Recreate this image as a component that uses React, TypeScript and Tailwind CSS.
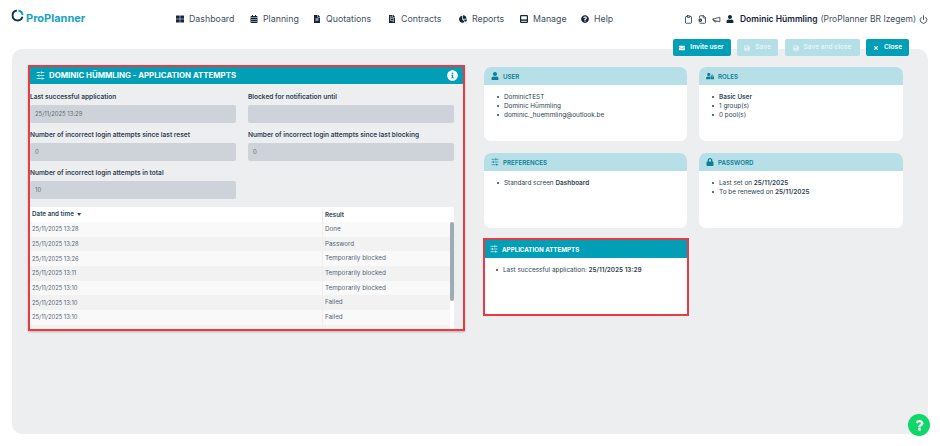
import type { ReactNode } from "react";
import {
  FaCalendarAlt,
  FaChartPie,
  FaEnvelope,
  FaFileAlt,
  FaFileInvoice,
  FaInfoCircle,
  FaLock,
  FaQuestion,
  FaQuestionCircle,
  FaSave,
  FaThLarge,
  FaTimes,
  FaUser,
  FaUserLock,
} from "react-icons/fa";
import { LuMegaphone, LuClipboard, LuFileCog, LuPower, LuSlidersHorizontal } from "react-icons/lu";

function ManageIcon() {
  return (
    <svg width="8" height="8" viewBox="0 0 8 8" fill="none">
      <rect x="0.6" y="0.6" width="6.8" height="6.8" rx="0.6" stroke="currentColor" strokeWidth="1.2" />
      <rect x="1" y="4.4" width="6" height="1.4" fill="currentColor" />
    </svg>
  );
}

const navItems = [
  { label: "Dashboard", icon: <FaThLarge />, width: "w-[74px]" },
  { label: "Planning", icon: <FaCalendarAlt />, width: "w-[63px]" },
  { label: "Quotations", icon: <FaFileAlt />, width: "w-[75px]" },
  { label: "Contracts", icon: <FaFileInvoice />, width: "w-[71px]" },
  { label: "Reports", icon: <FaChartPie />, width: "w-[61px]" },
  { label: "Manage", icon: <ManageIcon />, width: "w-[61px]" },
  { label: "Help", icon: <FaQuestionCircle />, width: "w-[46px]" },
];

const attempts = [
  ["25/11/2025 13:28", "Done"],
  ["25/11/2025 13:28", "Password"],
  ["25/11/2025 13:26", "Temporarily blocked"],
  ["25/11/2025 13:11", "Temporarily blocked"],
  ["25/11/2025 13:10", "Temporarily blocked"],
  ["25/11/2025 13:10", "Failed"],
  ["25/11/2025 13:10", "Failed"],
];

function Field({ label, value }: { label: string; value?: string }) {
  return (
    <div className="w-[206px]">
      <p className="h-[15px] pt-[2px] text-[6.55px] leading-[13px] font-semibold whitespace-nowrap text-[#2f3f52]">{label}</p>
      <div className="mt-[1px] flex h-[18px] items-center rounded-[2px] bg-[#cdd3d9] pl-[5px] text-[5.9px] text-[#5f6b78]">
        {value}
      </div>
    </div>
  );
}

function ActionButton({ icon, label, disabled, width }: { icon: ReactNode; label: string; disabled?: boolean; width: string }) {
  return (
    <button
      className={`flex h-[17px] items-center justify-center gap-[5px] rounded-[2px] text-[6.6px] font-semibold ${width} ${
        disabled ? "bg-[#b5dfe6] text-[#e6f5f7]" : "bg-[#009fb7] text-white"
      }`}
    >
      <span className="text-[6px]">{icon}</span>
      {label}
    </button>
  );
}

function Card({
  icon,
  title,
  items,
  active,
  className,
}: {
  icon: ReactNode;
  title: string;
  items: ReactNode[];
  active?: boolean;
  className: string;
}) {
  return (
    <section className={`flex w-full flex-col overflow-hidden bg-white ${className}`}>
      <div
        className={`flex h-[18px] shrink-0 items-center gap-[4px] text-[6.2px] ${
          active ? "bg-[#009fb7] pl-[5px] font-bold text-white" : "bg-[#b6dfe7] pl-[7px] font-semibold text-[#0b7f95]"
        }`}
      >
        <span className="flex w-[8px] justify-center text-[8px]">{icon}</span>
        <span className="pt-[1px]">{title}</span>
      </div>
      <ul className={`pt-[8px] text-[6.4px] leading-[8.8px] text-[#2f3f52] ${active ? "pl-[11px]" : "pl-[13px]"}`}>
        {items.map((item, i) => (
          <li key={i} className="flex items-center gap-[5px] whitespace-nowrap">
            <span className="size-[2px] rounded-full bg-[#2f3f52]" />
            <span>{item}</span>
          </li>
        ))}
      </ul>
    </section>
  );
}

export default function App() {
  return (
    <div className="relative h-[446px] w-[940px] overflow-hidden bg-white font-['Inter','Liberation_Sans',sans-serif] text-[#2f3f52]">
      <header className="flex h-[39px] items-start">
        <div className="flex w-[90px] items-start gap-[2px] pt-[9px] pl-[11px]">
          <svg width="13" height="13" viewBox="0 0 14 14" fill="none" className="shrink-0">
            <path d="M8 1.6a5.4 5.4 0 0 1 4.4 5" stroke="#009fb7" strokeWidth="2" />
            <path d="M12.3 8.4a5.4 5.4 0 1 1-6-6.8" stroke="#12324f" strokeWidth="2" />
          </svg>
          <span className="pt-[2px] text-[11px] leading-[14px] font-bold text-[#15a4c0]">ProPlanner</span>
        </div>
        <nav className="ml-[86px] flex h-[38px] items-center text-[8.8px] text-[#43505f]">
          {navItems.map((item) => (
            <a key={item.label} className={`flex items-center gap-[5px] ${item.width}`}>
              <span className="text-[8px] text-[#12263c]">{item.icon}</span>
              {item.label}
            </a>
          ))}
        </nav>
        <div className="ml-auto flex h-[38px] items-center pr-[12px] text-[8.5px] whitespace-nowrap text-[#12263c]">
          <LuClipboard className="mr-[5px] text-[9px]" />
          <LuFileCog className="mr-[5px] text-[9px]" />
          <LuMegaphone className="mr-[5px] text-[9px]" />
          <FaUser className="mr-[6px] text-[8px]" />
          <span className="font-semibold">Dominic Hümmling</span>
          <span className="ml-[3px] text-[#43505f]">(ProPlanner BR Izegem)</span>
          <LuPower className="ml-[3px] text-[9px]" />
        </div>
      </header>

      <div className="relative z-10 flex justify-end gap-[6.5px] pr-[31px]">
        <ActionButton icon={<FaEnvelope />} label="Invite user" width="w-[58px]" />
        <ActionButton icon={<FaSave />} label="Save" disabled width="w-[41px]" />
        <ActionButton icon={<FaSave />} label="Save and close" disabled width="w-[75px]" />
        <ActionButton icon={<FaTimes />} label="Close" width="w-[43px]" />
      </div>

      <main className="mx-[12px] -mt-[7px] flex h-[385px] w-[916px] gap-[19px] rounded-[10px] bg-[#edeef0] pt-[16px] pl-[16px]">
        <section className="h-[266px] w-[437px] shrink-0 border-2 border-[#ea3b42] shadow-[0_1px_2px_rgba(0,0,0,0.25)]">
          <div className="flex h-[17px] items-center bg-[#009fb7] pr-[5px] pl-[6px] text-[7.85px] font-bold text-white">
            <LuSlidersHorizontal className="mr-[4px] text-[9px]" />
            DOMINIC HÜMMLING - APPLICATION ATTEMPTS
            <FaInfoCircle className="ml-auto text-[11px]" />
          </div>
          <div className="flex gap-[12px] pt-[5px]">
            <Field label="Last successful application" value="25/11/2025 13:29" />
            <Field label="Blocked for notification until" />
          </div>
          <div className="flex gap-[12px] pt-[4px]">
            <Field label="Number of incorrect login attempts since last reset" value="0" />
            <Field label="Number of incorrect login attempts since last blocking" value="0" />
          </div>
          <div className="flex gap-[12px] pt-[4px]">
            <Field label="Number of incorrect login attempts in total" value="10" />
          </div>
          <div className="relative mt-[8px] h-[122px] w-[424px] overflow-hidden bg-white text-[6.3px]">
            <div className="grid h-[15px] grid-cols-[292px_1fr] items-center pt-[1px] font-semibold">
              <span className="flex items-center gap-[3px] pl-[2px]">
                Date and time <span className="text-[4px]">▼</span>
              </span>
              <span className="border-l border-[#eeeeee] pl-[2px] leading-[14px]">Result</span>
            </div>
            {attempts.map(([date, result], i) => (
              <div
                key={i}
                className={`grid h-[14.67px] w-[420px] grid-cols-[292px_1fr] items-center ${
                  i % 2 === 0 ? "bg-[#f9f9f9]" : "bg-[#f2f2f3]"
                } text-[#566373]`}
              >
                <span className="pt-[1px] pl-[2px] text-[5.8px]">{date}</span>
                <span className="border-l border-[#eeeeee] pt-[1px] pl-[2px] leading-[13.67px]">{result}</span>
              </div>
            ))}
            <div className="grid h-[5px] w-[420px] grid-cols-[292px_1fr] bg-[#f2f2f3]">
              <span />
              <span className="border-l border-[#eeeeee]" />
            </div>
            <div className="absolute top-[15px] right-0 h-[79px] w-[4px] rounded-full bg-[#9eaab5]" />
          </div>
        </section>

        <div className="grid grid-cols-[203px_204px] content-start gap-[12px] pt-[2px]">
          <Card
            className="h-[74px] rounded-[7px]"
            icon={<FaUser />}
            title="USER"
            items={["DominicTEST", "Dominic Hümmling", "dominic._huemmling@outlook.be"]}
          />
          <Card
            className="h-[74px] rounded-[7px]"
            icon={<FaUserLock />}
            title="ROLES"
            items={[<b className="font-semibold">Basic User</b>, "1 group(s)", "0 pool(s)"]}
          />
          <Card
            className="h-[75px] rounded-[7px]"
            icon={<LuSlidersHorizontal />}
            title="PREFERENCES"
            items={[
              <>
                Standard screen <b className="font-semibold">Dashboard</b>
              </>,
            ]}
          />
          <Card
            className="h-[75px] rounded-[7px]"
            icon={<FaLock />}
            title="PASSWORD"
            items={[
              <>
                Last set on <b className="font-semibold">25/11/2025</b>
              </>,
              <>
                To be renewed on <b className="font-semibold">25/11/2025</b>
              </>,
            ]}
          />
          <div className="-mt-[2px] -ml-[1px] h-[78px] w-[206px] border-2 border-[#ea3b42]">
            <Card
              active
              className="h-full"
              icon={<LuSlidersHorizontal />}
              title="APPLICATION ATTEMPTS"
              items={[
                <>
                  Last successful application: <b className="font-semibold">25/11/2025 13:29</b>
                </>,
              ]}
            />
          </div>
        </div>
      </main>

      <button className="absolute top-[414px] left-[908px] flex size-[22px] items-center justify-center rounded-full bg-[#10d76a] text-[11px] text-white">
        <FaQuestion />
      </button>
    </div>
  );
}
